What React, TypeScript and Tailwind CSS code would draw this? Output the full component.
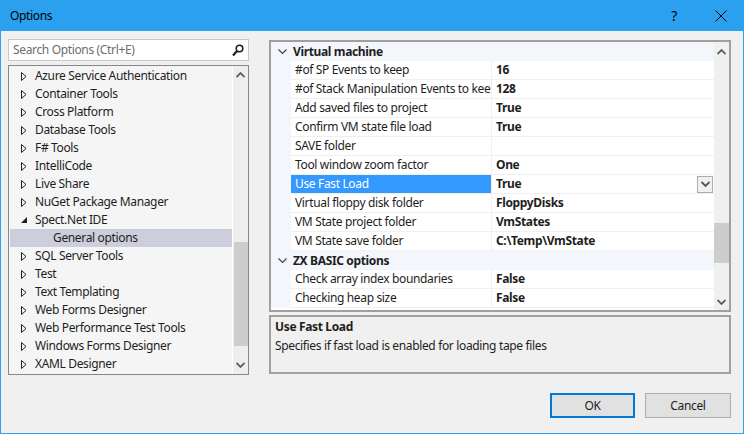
import React from 'react'

const font = { fontFamily: '"Noto Sans", "Open Sans", sans-serif', letterSpacing: '-0.35px' }

const treeItems: { label: string; kind: 'closed' | 'open' | 'child' }[] = [
  { label: 'Azure Service Authentication', kind: 'closed' },
  { label: 'Container Tools', kind: 'closed' },
  { label: 'Cross Platform', kind: 'closed' },
  { label: 'Database Tools', kind: 'closed' },
  { label: 'F# Tools', kind: 'closed' },
  { label: 'IntelliCode', kind: 'closed' },
  { label: 'Live Share', kind: 'closed' },
  { label: 'NuGet Package Manager', kind: 'closed' },
  { label: 'Spect.Net IDE', kind: 'open' },
  { label: 'General options', kind: 'child' },
  { label: 'SQL Server Tools', kind: 'closed' },
  { label: 'Test', kind: 'closed' },
  { label: 'Text Templating', kind: 'closed' },
  { label: 'Web Forms Designer', kind: 'closed' },
  { label: 'Web Performance Test Tools', kind: 'closed' },
  { label: 'Windows Forms Designer', kind: 'closed' },
  { label: 'XAML Designer', kind: 'closed' },
]

type Row =
  | { type: 'cat'; label: string }
  | { type: 'prop'; name: string; value: string; selected?: boolean }

const rows: Row[] = [
  { type: 'cat', label: 'Virtual machine' },
  { type: 'prop', name: '#of SP Events to keep', value: '16' },
  { type: 'prop', name: '#of Stack Manipulation Events to kee', value: '128' },
  { type: 'prop', name: 'Add saved files to project', value: 'True' },
  { type: 'prop', name: 'Confirm VM state file load', value: 'True' },
  { type: 'prop', name: 'SAVE folder', value: '' },
  { type: 'prop', name: 'Tool window zoom factor', value: 'One' },
  { type: 'prop', name: 'Use Fast Load', value: 'True', selected: true },
  { type: 'prop', name: 'Virtual floppy disk folder', value: 'FloppyDisks' },
  { type: 'prop', name: 'VM State project folder', value: 'VmStates' },
  { type: 'prop', name: 'VM State save folder', value: 'C:\\Temp\\VmState' },
  { type: 'cat', label: 'ZX BASIC options' },
  { type: 'prop', name: 'Check array index boundaries', value: 'False' },
  { type: 'prop', name: 'Checking heap size', value: 'False' },
]

const ClosedArrow = () => (
  <svg width="6" height="9" viewBox="0 0 6 9">
    <path d="M0.5 0.5 L5 4.5 L0.5 8.5 Z" fill="none" stroke="#1e1e1e" strokeWidth="1" />
  </svg>
)

const OpenArrow = () => (
  <svg width="6" height="6" viewBox="0 0 6 6">
    <path d="M6 0 L6 6 L0 6 Z" fill="#1e1e1e" />
  </svg>
)

const Chevron = ({ up, color = '#606060' }: { up?: boolean; color?: string }) => (
  <svg width="9" height="6" viewBox="0 0 9 6">
    {up ? (
      <path d="M0.5 5 L4.5 1 L8.5 5" fill="none" stroke={color} strokeWidth="1.8" />
    ) : (
      <path d="M0.5 1 L4.5 5 L8.5 1" fill="none" stroke={color} strokeWidth="1.8" />
    )}
  </svg>
)

const CatChevron = () => (
  <svg width="9" height="6" viewBox="0 0 9 6">
    <path d="M0.5 0.5 L4.5 4.5 L8.5 0.5" fill="none" stroke="#444" strokeWidth="1.2" />
  </svg>
)

const Tree = () => (
  <div className="mt-[4px] flex h-[310px] border border-[#828790] bg-[#f5f5f5]">
    <div className="flex-1 pt-[1px]">
      {treeItems.map((it) => (
        <div
          key={it.label}
          className={`flex h-[18px] items-center ${it.kind === 'child' ? 'ml-[1px] bg-[#cccedb] pl-[43px]' : 'pl-[12px]'}`}
        >
          {it.kind !== 'child' && (
            <span className="flex w-[14px] items-center">
              {it.kind === 'open' ? <OpenArrow /> : <ClosedArrow />}
            </span>
          )}
          <span className="text-[12px] text-[#1e1e1e]">{it.label}</span>
        </div>
      ))}
    </div>
    <div className="flex w-[16px] flex-col items-center border-l border-white bg-[#eeeeee]">
      <div className="flex h-[18px] items-center">
        <Chevron up />
      </div>
      <div className="mt-[158px] h-[104px] w-[14px] bg-[#cdcdcd]" />
      <div className="mt-auto flex h-[18px] items-center">
        <Chevron />
      </div>
    </div>
  </div>
)

const Grid = () => (
  <div className="flex h-[272px] border-2 border-[#a0a0a0] bg-white">
    <div className="flex-1 overflow-hidden">
      {rows.map((r, i) =>
        r.type === 'cat' ? (
          <div key={i} className="flex h-[19px] items-center bg-[#f3f6fb]">
            <span className="flex w-[22px] justify-center">
              <CatChevron />
            </span>
            <span className="text-[12px] font-bold text-[#1e1e1e]">{r.label}</span>
          </div>
        ) : (
          <div key={i} className="flex h-[19px]">
            <div className="w-[20px] bg-[#f3f6fb]" />
            <div
              className={`flex w-[200px] items-center overflow-hidden whitespace-nowrap border-b border-[#f0f0f0] pl-[4px] text-[12px] ${r.selected ? 'bg-[#3399ff] text-white' : 'text-[#1e1e1e]'}`}
            >
              {r.name}
            </div>
            <div className="flex flex-1 items-center border-b border-l border-[#f0f0f0] pl-[4px] text-[12px] font-bold text-[#1e1e1e]">
              <span className="flex-1">{r.value}</span>
              {r.selected && (
                <span className="mr-[1px] flex h-[17px] w-[16px] items-center justify-center border border-[#acacac] bg-[#f0f0f0]">
                  <Chevron color="#555" />
                </span>
              )}
            </div>
          </div>
        ),
      )}
    </div>
    <div className="flex w-[15px] flex-col items-center bg-[#f0f0f0]">
      <div className="flex h-[19px] items-center">
        <Chevron up />
      </div>
      <div className="mt-[162px] h-[40px] w-[15px] bg-[#cdcdcd]" />
      <div className="mt-auto flex h-[17px] items-center">
        <Chevron />
      </div>
    </div>
  </div>
)

export default function App() {
  return (
    <div
      className="flex h-[434px] w-[744px] flex-col border-x border-b border-[#2ba0ee] bg-[#f0f0f0]"
      style={font}
    >
      <div className="flex h-[31px] shrink-0 items-center bg-[#2ba0ee] pl-[9px]">
        <span className="flex-1 text-[12px] text-black">Options</span>
        <span className="mr-[38px] text-[14px] text-black">?</span>
        <svg className="mr-[16px]" width="12" height="12" viewBox="0 0 12 12">
          <path d="M0.5 0.5 L11.5 11.5 M11.5 0.5 L0.5 11.5" stroke="#000" strokeWidth="1" />
        </svg>
      </div>
      <div className="flex pt-[8px] pl-[7px]">
        <div className="w-[241px]">
          <div className="flex h-[22px] items-center border border-[#c8c8c8] bg-white pl-[4px] pr-[4px]">
            <span className="flex-1 text-[12px] text-[#6d6d6d]">Search Options (Ctrl+E)</span>
            <svg width="12" height="13" viewBox="0 0 12 13">
              <circle cx="7.5" cy="4.5" r="3.3" fill="none" stroke="#1e1e1e" strokeWidth="1.6" />
              <path d="M5 7 L1 11.5" stroke="#1e1e1e" strokeWidth="2.2" />
            </svg>
          </div>
          <Tree />
        </div>
        <div className="ml-[20px] mt-[1px] w-[462px]">
          <Grid />
          <div className="mt-[3px] h-[59px] border-2 border-[#a0a0a0] bg-[#f0f0f0] px-[4px] pt-[1px]">
            <div className="text-[12px] font-bold text-[#1e1e1e]">Use Fast Load</div>
            <div className="mt-[1px] text-[12px] text-[#1e1e1e]">
              Specifies if fast load is enabled for loading tape files
            </div>
          </div>
        </div>
      </div>
      <div className="mt-auto mb-[15px] flex justify-end pr-[12px]">
        <button className="h-[25px] w-[85px] border-2 border-[#0078d7] bg-[#e1e1e1] text-[12px] text-[#1e1e1e]">
          OK
        </button>
        <button className="ml-[10px] h-[25px] w-[86px] border border-[#adadad] bg-[#e1e1e1] text-[12px] text-[#1e1e1e]">
          Cancel
        </button>
      </div>
    </div>
  )
}
